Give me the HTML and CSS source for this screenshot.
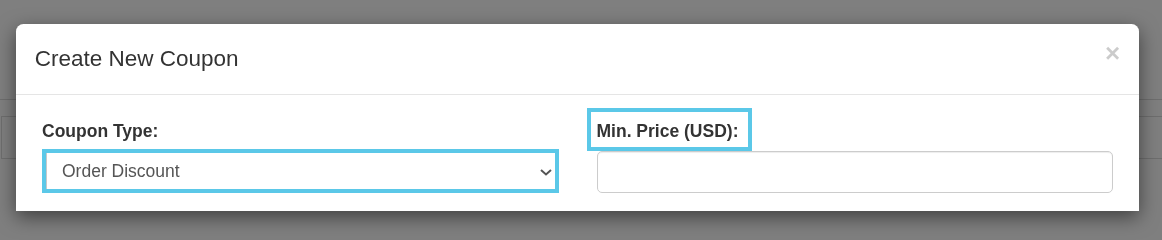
FILE: index.html
```html
<!DOCTYPE html>
<html lang="en">
<head>
<meta charset="utf-8">
<title>Create New Coupon</title>
<link rel="stylesheet" href="styles.css">
</head>
<body>
<div class="page">
  <div class="page-header"></div>
  <div class="page-row"></div>
</div>
<div class="backdrop"></div>
<div class="modal">
  <div class="modal-header">
    <h4 class="modal-title">Create New Coupon</h4>
    <button class="close" type="button" aria-label="Close">×</button>
  </div>
  <div class="modal-body">
    <div class="field">
      <label class="field-label">Coupon Type:</label>
      <div class="select-wrap">
        <select class="select-control">
          <option>Order Discount</option>
        </select>
        <svg class="chevron" width="12" height="7" viewBox="0 0 12 7"><path d="M1 1 L6 5.5 L11 1" fill="none" stroke="#555" stroke-width="2"/></svg>
      </div>
    </div>
    <div class="field">
      <label class="field-label field-label-marked">Min. Price (USD):</label>
      <input class="text-control" type="text">
    </div>
  </div>
</div>
</body>
</html>
```

FILE: styles.css
```css
html, body {
  margin: 0;
  padding: 0;
}
body {
  width: 1162px;
  height: 211px;
  overflow: hidden;
  background: #fff;
  font-family: "Liberation Sans", Arial, sans-serif;
  color: #333;
}
.page-header {
  height: 99px;
  border-bottom: 1px solid #dcdcdc;
}
.page-row {
  margin-top: 16px;
  margin-left: 1px;
  height: 41px;
  border: 1px solid #dcdcdc;
  border-right: none;
}
.backdrop {
  position: fixed;
  inset: 0;
  background: rgba(0, 0, 0, 0.5);
}
.modal {
  position: absolute;
  top: 24px;
  left: 16px;
  width: 1123px;
  height: 187px;
  overflow: hidden;
  background: #fff;
  border-radius: 7.5px 7.5px 0 0;
  box-shadow: 0 6px 19px rgba(0, 0, 0, 0.5);
}
.modal-header {
  display: flex;
  align-items: flex-start;
  justify-content: space-between;
  padding: 18.75px;
  border-bottom: 1px solid #e5e5e5;
}
.modal-title {
  margin: 0;
  font-size: 22.5px;
  font-weight: normal;
  line-height: 32px;
  color: #333;
}
.close {
  margin-top: -2.5px;
  padding: 0;
  border: 0;
  background: none;
  font-family: "Liberation Sans", Arial, sans-serif;
  font-size: 26px;
  font-weight: bold;
  line-height: 1;
  color: #000;
  opacity: 0.2;
}
.modal-body {
  display: grid;
  grid-template-columns: 1fr 1fr;
  column-gap: 38px;
  align-items: end;
  padding: 13.5px 26px 0 26px;
}
.field {
  display: flex;
  flex-direction: column;
  align-items: flex-start;
}
.field-label {
  display: inline-block;
  font-size: 17.5px;
  font-weight: bold;
  line-height: 25px;
  margin-bottom: 5px;
  color: #333;
}
.field-label-marked {
  margin: 0 0 0 -10px;
  padding: 7px 10px 3px 6px;
  border: 4px solid #5bc8e8;
}
.select-wrap {
  position: relative;
  width: 100%;
}
.select-control {
  display: block;
  width: 100%;
  height: 44px;
  margin: 0;
  padding: 0 30px 0 16px;
  border: 4px solid #5bc8e8;
  border-radius: 0;
  background: #fff;
  box-shadow: inset 1px 0 0 #c8c8c8;
  appearance: none;
  -webkit-appearance: none;
  font-family: "Liberation Sans", Arial, sans-serif;
  font-size: 17.5px;
  color: #555;
  outline: none;
}
.chevron {
  position: absolute;
  right: 7px;
  top: 20px;
}
.text-control {
  display: block;
  box-sizing: border-box;
  width: 100%;
  height: 42px;
  margin: 0;
  padding: 0 15px;
  border: 1px solid #ccc;
  border-radius: 5px;
  background: #fff;
  box-shadow: inset 0 1px 1px rgba(0, 0, 0, 0.075);
  font-family: "Liberation Sans", Arial, sans-serif;
  font-size: 17.5px;
  color: #555;
}
```
